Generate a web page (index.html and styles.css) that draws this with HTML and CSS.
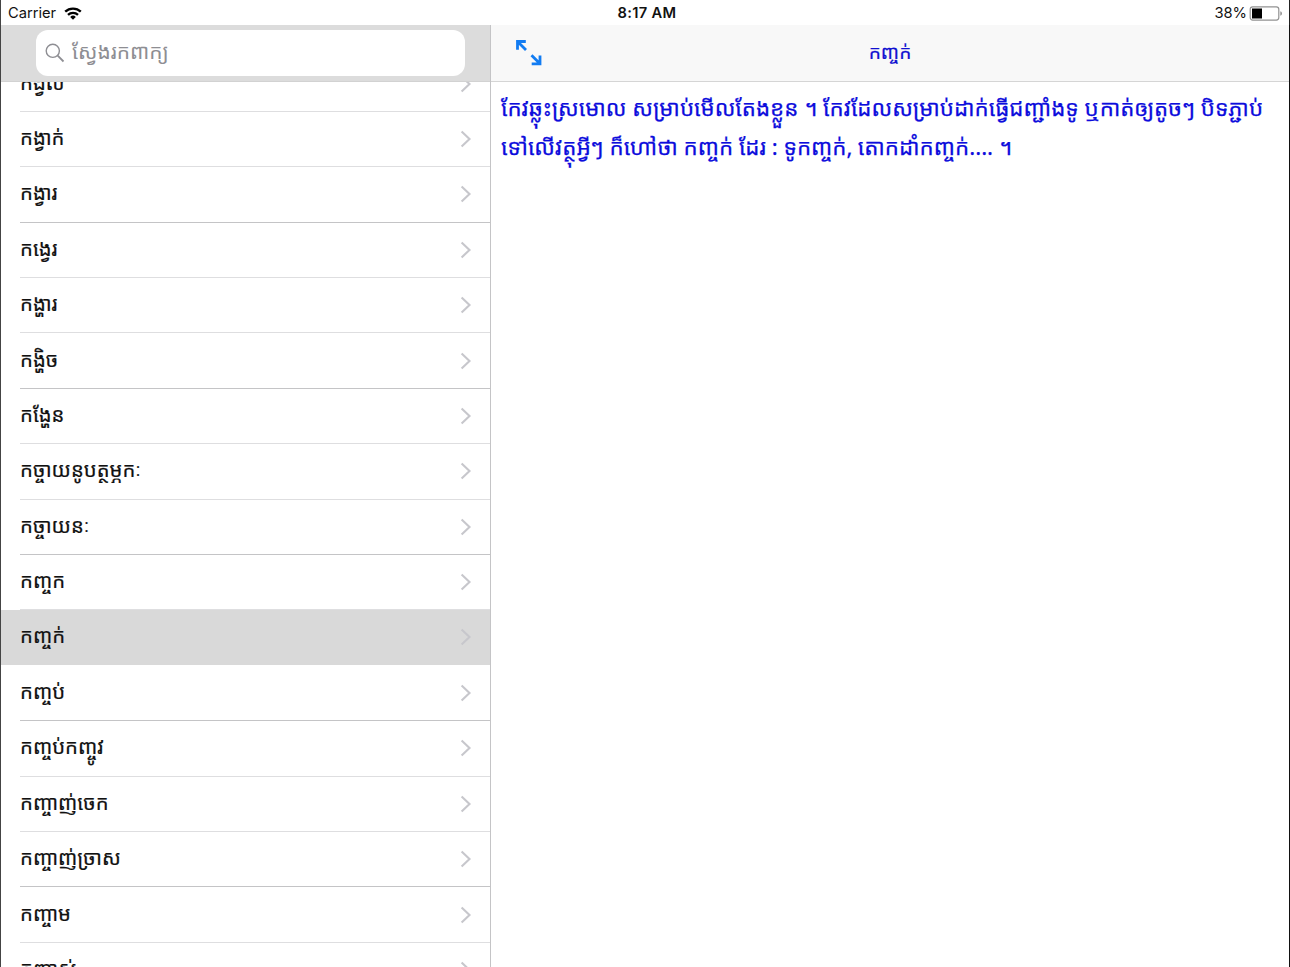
FILE: index.html
```html
<!DOCTYPE html>
<html lang="km">
<head>
    <meta charset="utf-8">
    <title>កញ្ចក់</title>
    <link rel="stylesheet" href="styles.css">
</head>
<body>
    <svg class="defs" width="0" height="0">
        <symbol id="chevron" viewBox="0 0 12 18">
            <path d="M1.6 1.6 9.5 9 1.6 16.4" fill="none" stroke="#c7c7cc" stroke-width="2.1"/>
        </symbol>
    </svg>

    <header class="status">
        <div class="carrier">
            <span>Carrier</span>
            <svg width="18" height="13" viewBox="0 0 18 13">
                <path d="M1.2 4.7a11.2 11.2 0 0 1 15.6 0M4 7.8a7.2 7.2 0 0 1 10 0" fill="none" stroke="#000" stroke-width="2.3"/>
                <path d="M9 12.8 6.2 9.9a4 4 0 0 1 5.6 0z"/>
            </svg>
        </div>
        <div class="time">8:17 AM</div>
        <div class="battery">
            <span>38%</span>
            <svg width="34" height="15" viewBox="0 0 34 15">
                <rect x="1.2" y=".9" width="28.6" height="13.2" rx="2.5" fill="#fff" stroke="#929292" stroke-width="1.2"/>
                <rect x="3" y="2.5" width="10" height="10"/>
                <path d="M31.3 5.2q1.7.5 1.7 2.3t-1.7 2.3z" fill="#929292"/>
            </svg>
        </div>
    </header>

    <main class="split">
        <section class="master">
            <div class="search-bar">
                <div class="search">
                    <svg width="20" height="20" viewBox="0 0 20 20">
                        <path d="M12.7 12.7 18.5 18.5" stroke="#8e8e93" stroke-width="1.8"/>
                        <circle cx="7.8" cy="7.8" r="6.6" fill="none" stroke="#8e8e93" stroke-width="1.4"/>
                    </svg>
                    <span>ស្វែងរកពាក្យ</span>
                </div>
            </div>
            <div class="list-view">
                <ul class="list">
                    <li><span>កង្វល់</span><svg><use href="#chevron"/></svg></li>
                    <li><span>កង្វាក់</span><svg><use href="#chevron"/></svg></li>
                    <li class="dark"><span>កង្វារ</span><svg><use href="#chevron"/></svg></li>
                    <li><span>កង្វេរ</span><svg><use href="#chevron"/></svg></li>
                    <li><span>កង្ហារ</span><svg><use href="#chevron"/></svg></li>
                    <li class="dark"><span>កង្ហិច</span><svg><use href="#chevron"/></svg></li>
                    <li><span>កង្ហែន</span><svg><use href="#chevron"/></svg></li>
                    <li><span>កច្ចាយនូបត្ថម្ភកៈ</span><svg><use href="#chevron"/></svg></li>
                    <li class="dark"><span>កច្ចាយនៈ</span><svg><use href="#chevron"/></svg></li>
                    <li><span>កញ្ចក</span><svg><use href="#chevron"/></svg></li>
                    <li class="selected"><span>កញ្ចក់</span><svg><use href="#chevron"/></svg></li>
                    <li class="dark"><span>កញ្ចប់</span><svg><use href="#chevron"/></svg></li>
                    <li><span>កញ្ចប់កញ្ចូវ</span><svg><use href="#chevron"/></svg></li>
                    <li><span>កញ្ចាញ់ចេក</span><svg><use href="#chevron"/></svg></li>
                    <li class="dark"><span>កញ្ចាញ់ច្រាស</span><svg><use href="#chevron"/></svg></li>
                    <li><span>កញ្ចាម</span><svg><use href="#chevron"/></svg></li>
                    <li><span>កញ្ចាស់</span><svg><use href="#chevron"/></svg></li>
                </ul>
            </div>
        </section>

        <section class="detail">
            <div class="nav">
                <svg width="28" height="28" viewBox="0 0 28 28">
                    <path d="M10.8 2.5H2.5v8.3M3 3l8 8M25 16.5v8.3h-8.3M24.5 24.3l-8-8" fill="none" stroke="#127cf2" stroke-width="2.8"/>
                </svg>
                <h1>កញ្ចក់</h1>
            </div>
            <div class="definition">
                <p>កែវឆ្លុះស្រមោល សម្រាប់មើលតែងខ្លួន ។ កែវដែលសម្រាប់ដាក់ធ្វើជញ្ជាំងទូ ឬកាត់ឲ្យតូចៗ បិទភ្ជាប់</p>
                <p>ទៅលើវត្ថុអ្វីៗ ក៏ហៅថា កញ្ចក់ ដែរ : ទូកញ្ចក់, តោកដាំកញ្ចក់.... ។</p>
            </div>
        </section>
    </main>
</body>
</html>
```
FILE: styles.css
```css
* { box-sizing: border-box; }
body { margin: 0; width: 1290px; height: 967px; overflow: hidden; display: flex; flex-direction: column; background: #fff; color: #111; font-family: "Noto Sans Khmer", "Khmer OS", Inter, "DejaVu Sans", sans-serif; }
svg { display: block; flex: none; }
.defs { position: absolute; }

.status { display: grid; grid-template-columns: 1fr auto 1fr; align-items: center; height: 25px; padding: 1px 6px 0 7px; border-left: 1px solid #444; border-right: 1px solid #222; font: 14.7px/25px Inter, sans-serif; }
.carrier, .battery { display: flex; align-items: center; }
.carrier { gap: 8px; }
.battery { justify-content: flex-end; gap: 2px; }
.time { padding-left: 3px; font-weight: 600; letter-spacing: .3px; }

.split { flex: 1; min-height: 0; display: flex; border-left: 1px solid #444; border-right: 1px solid #111; }
.master { width: 490px; display: flex; flex-direction: column; border-right: 1px solid #c4c4c6; }
.search-bar { flex: none; height: 57px; padding: 5px 25px 6px 35px; background: #dcdcdc; border-bottom: 1px solid #d2d2d2; }
.search { display: flex; align-items: center; gap: 7px; height: 46px; padding: 0 0 1px 9px; border-radius: 12px; background: #fff; color: #8e8e93; font-size: 20.9px; line-height: 40px; }
.search span { padding-bottom: 4px; }
.list-view { flex: 1; min-height: 0; overflow: hidden; }
.list { margin: -25.5px 0 0; padding: 0; list-style: none; }
.list li { display: flex; align-items: center; justify-content: space-between; height: 55.4px; margin-left: 19px; padding-right: 18px; border-bottom: 1px solid #dedee0; font-size: 20.3px; line-height: 50px; white-space: nowrap; -webkit-text-stroke: .2px; }
.list li.dark { border-color: #c4c4c6; }
.list li.selected { margin: -.5px 0 .5px; padding-left: 19px; background: #d9d9d9; border-color: #d9d9d9; }
.list span { padding-bottom: 4px; }
.list svg { width: 12px; height: 18px; }

.detail { flex: 1; min-width: 0; }
.nav { display: grid; grid-template-columns: 28px 1fr 28px; align-items: center; height: 57px; padding: 0 24px 1px; background: #f8f8f8; border-bottom: 1px solid #d5d5d5; }
.nav h1 { margin: 0; padding-bottom: 2px; color: #1010d0; font-size: 19.2px; font-weight: 400; line-height: 50px; text-align: center; -webkit-text-stroke: .2px; }
.definition { padding: 6px 10px; color: #0c0cdc; font-size: 22.3px; line-height: 39px; white-space: nowrap; -webkit-text-stroke: .25px; }
.definition p { margin: 0; }
```
